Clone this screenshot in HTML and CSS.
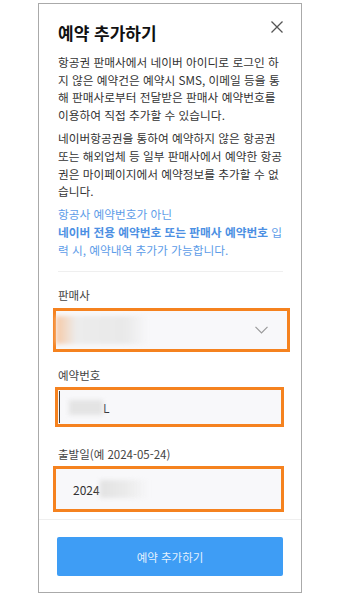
FILE: index.html
```html
<!DOCTYPE html>
<html lang="ko">
<head>
    <meta charset="UTF-8">
    <meta name="viewport" content="width=device-width, initial-scale=1.0">
    <title>예약 추가하기</title>
    <link rel="stylesheet" href="styles.css">
</head>
<body>
    <!-- Dialog -->
    <div class="dialog">
        <div class="dialog-head">
            <h1 class="dialog-title">예약 추가하기</h1>
            <button class="close-btn" aria-label="닫기">
                <svg width="12" height="12" viewBox="0 0 12 12">
                    <path d="M0.5 0.5 L11.5 11.5 M11.5 0.5 L0.5 11.5" stroke="#555" stroke-width="1.3" fill="none"/>
                </svg>
            </button>
        </div>

        <div class="dialog-body">
            <p class="desc">항공권 판매사에서 네이버 아이디로 로그인 하지 않은 예약건은 예약시 SMS, 이메일 등을 통해 판매사로부터 전달받은 판매사 예약번호를 이용하여 직접 추가할 수 있습니다.</p>
            <p class="desc">네이버항공권을 통하여 예약하지 않은 항공권 또는 해외업체 등 일부 판매사에서 예약한 항공권은 마이페이지에서 예약정보를 추가할 수 없습니다.</p>
            <p class="desc notice">항공사 예약번호가 아닌<br><strong>네이버 전용 예약번호 또는 판매사 예약번호</strong> 입력 시, 예약내역 추가가 가능합니다.</p>

            <div class="form">
                <div class="form-group">
                    <label class="form-label">판매사</label>
                    <div class="field field-select">
                        <span class="blur blur-select"></span>
                        <svg class="chevron" width="13" height="8" viewBox="0 0 13 8">
                            <path d="M0.5 0.8 L6.5 6.8 L12.5 0.8" stroke="#9a9a9a" stroke-width="1.2" fill="none"/>
                        </svg>
                    </div>
                </div>

                <div class="form-group">
                    <label class="form-label">예약번호</label>
                    <div class="field field-number">
                        <span class="caret"></span>
                        <span class="blur blur-number"></span>
                        <span class="field-text">L</span>
                    </div>
                </div>

                <div class="form-group">
                    <label class="form-label">출발일(예 2024-05-24)</label>
                    <div class="field field-date">
                        <span class="field-text">2024</span>
                        <span class="blur blur-date"></span>
                    </div>
                </div>
            </div>
        </div>

        <div class="dialog-foot">
            <button class="submit-btn">예약 추가하기</button>
        </div>
    </div>
</body>
</html>
```

FILE: styles.css
```css
* {
    margin: 0;
    padding: 0;
    box-sizing: border-box;
    font-family: 'Noto Sans CJK KR', 'Noto Sans', sans-serif;
}

:root {
    --orange: #f5821f;
    --blue: #3e9df5;
    --text: #333;
    --line: #efefef;
}

body {
    background-color: #fff;
    padding-top: 3px;
}

/* Dialog */
.dialog {
    margin-left: 38px;
    width: 264px;
    border: 1px solid #aaa;
    background-color: #fff;
}

.dialog-head {
    display: flex;
    justify-content: space-between;
    align-items: flex-start;
    padding: 18px 18px 0 19px;
}

.dialog-title {
    font-size: 17px;
    line-height: 22px;
    font-weight: bold;
    color: #111;
}

.close-btn {
    background: none;
    border: none;
    width: 12px;
    height: 12px;
    margin-top: -1px;
    display: flex;
}

.dialog-body {
    padding: 9px 18px 0 19px;
}

.desc {
    font-size: 11.7px;
    line-height: 17.7px;
    color: var(--text);
}

.desc + .desc {
    margin-top: 5.3px;
}

.notice {
    color: #5d9ce8;
    padding-bottom: 13px;
    border-bottom: 1px solid var(--line);
}

.notice strong {
    color: #4c90e3;
}

/* Form */
.form {
    padding-top: 14px;
}

.form-group {
    display: flex;
    flex-direction: column;
}

.form-group + .form-group {
    margin-top: 14px;
}

.form-group:last-child {
    margin-top: 18px;
}

.form-label {
    font-size: 11.5px;
    line-height: 18px;
    color: #444;
}

.field {
    position: relative;
    display: flex;
    align-items: center;
    background-color: #f8f8fa;
    border: 3px solid var(--orange);
    margin-top: 4px;
}

.field-select {
    height: 44px;
    width: 237px;
    margin-left: -5px;
    justify-content: space-between;
}

.field-number {
    height: 40px;
    width: 229px;
    margin-left: -3px;
    margin-top: 3px;
    padding-left: 1px;
}

.field-date {
    height: 46px;
    width: 231px;
    margin-left: -5px;
    margin-top: 3px;
    padding-left: 17px;
}

.field-text {
    font-size: 12px;
    color: #333;
}

.blur {
    display: block;
    filter: blur(2px);
}

.blur-select {
    width: 92px;
    height: 28px;
    background: linear-gradient(to right, #f7c9a6, #ececec 22%, #e9e9e9 75%, rgba(240, 240, 240, 0));
}

.chevron {
    margin-right: 19px;
}

.caret {
    width: 1px;
    height: 32px;
    background-color: #444;
}

.blur-number {
    width: 34px;
    height: 15px;
    margin-left: 9px;
    background-color: #e4e4e4;
}

.blur-date {
    width: 48px;
    height: 18px;
    background: linear-gradient(to right, #e2e2e2, #ececec 60%, rgba(240, 240, 240, 0));
}

/* Footer */
.dialog-foot {
    margin-top: 7px;
    border-top: 1px solid var(--line);
    padding: 17px 18px 16px 18px;
}

.submit-btn {
    width: 226px;
    height: 39px;
    background-color: var(--blue);
    color: rgba(255, 255, 255, 0.88);
    border: none;
    border-radius: 2px;
    font-size: 11.5px;
}
```
